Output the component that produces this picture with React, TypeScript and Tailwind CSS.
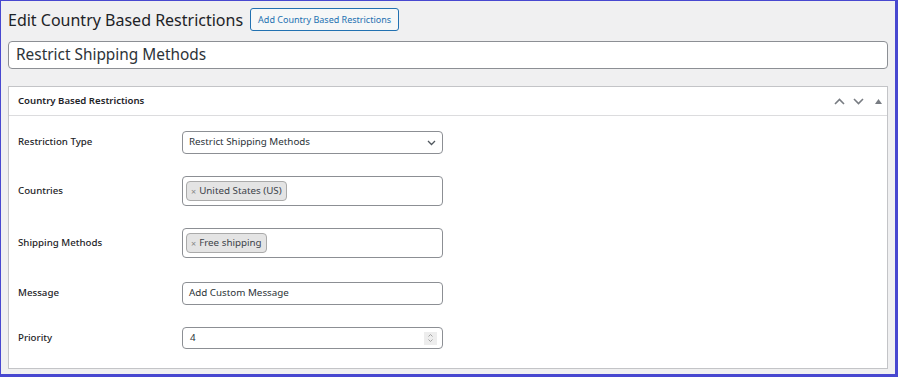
import React from 'react'

const font = { fontFamily: '"Noto Sans", "Open Sans", sans-serif' }

const Tag = ({ label }: { label: string }) => (
  <span className="inline-flex items-center h-[20px] px-[4px] gap-[3px] bg-[#e4e4e4] border border-[#aaaaaa] rounded-[4px] text-[9.8px] text-[#3c434a]">
    <span className="text-[9px] text-[#888] leading-none">×</span>
    {label}
  </span>
)

const Row = ({ label, className = '', children }: { label: string; className?: string; children: React.ReactNode }) => (
  <div className={`flex items-center ${className}`}>
    <div className="w-[164px] text-[9.7px] font-medium text-[#1d2327]">{label}</div>
    <div className="w-[261px]">{children}</div>
  </div>
)

export default function App() {
  return (
    <div
      style={font}
      className="w-[898px] h-[377px] bg-[#f0f0f1] border-t-[1px] border-l-[1px] border-r-[3px] border-b-[3px] border-[#4848d0] px-[7px] pt-[7px] overflow-hidden"
    >
      <div className="flex items-center gap-[7px] h-[23px]">
        <h1 className="text-[16px] text-[#1d2327] leading-none">Edit Country Based Restrictions</h1>
        <button className="h-[23px] px-[7px] border border-[#2271b1] rounded-[3px] bg-[#f6f7f7] text-[#2271b1] text-[9px]">
          Add Country Based Restrictions
        </button>
      </div>

      <div className="mt-[10px] h-[28px] bg-white border border-[#8c8f94] rounded-[4px] flex items-center px-[7px]">
        <span className="text-[15.4px] text-[#2c3338]">Restrict Shipping Methods</span>
      </div>

      <div className="mt-[17px] bg-white border border-[#c3c4c7] h-[283px]">
        <div className="h-[29px] border-b border-[#dcdcde] flex items-center justify-between pl-[9px] pr-[5px]">
          <span className="text-[9.6px] font-semibold text-[#1d2327]">Country Based Restrictions</span>
          <div className="flex items-center gap-[8px] text-[#787c82]">
            <svg width="11" height="7" viewBox="0 0 11 7" fill="none" stroke="currentColor" strokeWidth="1.6">
              <path d="M1 6 L5.5 1.5 L10 6" />
            </svg>
            <svg width="11" height="7" viewBox="0 0 11 7" fill="none" stroke="currentColor" strokeWidth="1.6">
              <path d="M1 1 L5.5 5.5 L10 1" />
            </svg>
            <svg width="7" height="5" viewBox="0 0 7 5" fill="currentColor" className="ml-[3px]">
              <path d="M0 5 L3.5 0 L7 5 Z" />
            </svg>
          </div>
        </div>

        <div className="flex flex-col gap-[22px] pt-[15px] pl-[9px]">
          <Row label="Restriction Type">
            <div className="h-[23px] border border-[#8c8f94] rounded-[4px] flex items-center justify-between pl-[6px] pr-[6px]">
              <span className="text-[9.8px] text-[#2c3338]">Restrict Shipping Methods</span>
              <svg width="9" height="6" viewBox="0 0 9 6" fill="none" stroke="#50575e" strokeWidth="1.3">
                <path d="M1 1 L4.5 4.5 L8 1" />
              </svg>
            </div>
          </Row>
          <Row label="Countries">
            <div className="h-[30px] border border-[#8c8f94] rounded-[4px] flex items-center px-[3px]">
              <Tag label="United States (US)" />
            </div>
          </Row>
          <Row label="Shipping Methods">
            <div className="h-[30px] border border-[#8c8f94] rounded-[4px] flex items-center px-[3px]">
              <Tag label="Free shipping" />
            </div>
          </Row>
          <Row label="Message" className="mt-[2px]">
            <div className="h-[23px] border border-[#8c8f94] rounded-[4px] flex items-center px-[6px]">
              <span className="text-[9.8px] text-[#2c3338]">Add Custom Message</span>
            </div>
          </Row>
          <Row label="Priority">
            <div className="h-[22px] border border-[#8c8f94] rounded-[4px] flex items-center justify-between pl-[7px] pr-[5px]">
              <span className="text-[9.8px] text-[#2c3338]">4</span>
              <div className="w-[13px] h-[13px] bg-[#ededed] flex items-center justify-center">
                <svg width="7" height="10" viewBox="0 0 7 10" fill="none" stroke="#9a9a9a" strokeWidth="0.9">
                  <path d="M1.5 3.5 L3.5 1.5 L5.5 3.5" />
                  <path d="M1.5 6.5 L3.5 8.5 L5.5 6.5" />
                </svg>
              </div>
            </div>
          </Row>
        </div>
      </div>
    </div>
  )
}
